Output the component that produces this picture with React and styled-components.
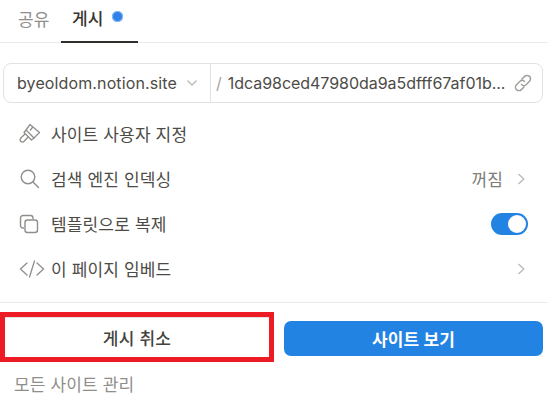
import styled, { createGlobalStyle } from "styled-components";

const GlobalStyle = createGlobalStyle`
  html, body {
    margin: 0;
    padding: 0;
    background: #fff;
    overflow: hidden;
  }
  * {
    box-sizing: border-box;
  }
`;

const Panel = styled.div`
  width: 548px;
  height: 405px;
  font-family: Inter, "Noto Sans CJK KR", sans-serif;
  color: #37352f;
  display: flex;
  flex-direction: column;
`;

const Tabs = styled.div`
  height: 43px;
  display: flex;
  padding-left: 11px;
  border-bottom: 1px solid #ebebea;
`;

const Tab = styled.div`
  height: 43px;
  padding: 0 0 6px ${(p) => (p.$active ? "11px" : "7px")};
  width: ${(p) => (p.$active ? "77px" : "50px")};
  display: flex;
  align-items: center;
  gap: 10px;
  font-size: 17px;
  font-weight: ${(p) => (p.$active ? 500 : 400)};
  color: ${(p) => (p.$active ? "#37352f" : "#8f8e8b")};
  border-bottom: ${(p) => (p.$active ? "2px solid #2f2e2b" : "none")};
`;

const Dot = styled.span`
  width: 11px;
  height: 11px;
  margin: -2px 0 0 -1px;
  border-radius: 50%;
  background: #2f80e8;
  box-shadow: inset 0 0 0 1px #8dbcf3;
`;

const AddressBar = styled.div`
  margin: 20px 5px 0 3px;
  height: 40px;
  border: 1px solid #e2e2e0;
  border-radius: 8px;
  display: flex;
  align-items: center;
  font-size: 16px;
`;

const Domain = styled.div`
  width: 207px;
  height: 100%;
  padding-left: 13px;
  display: flex;
  align-items: center;
  gap: 9px;
  border-right: 1px solid #e2e2e0;
  color: #4d4b46;
  letter-spacing: 0.12px;
`;

const Path = styled.div`
  flex: 1;
  display: flex;
  align-items: center;
  padding: 0 9px 0 5px;
  color: #4d4b46;
  min-width: 0;
`;

const Slash = styled.span`
  color: #a5a4a1;
  margin-right: 6px;
`;

const PathText = styled.span`
  flex: 1;
  white-space: nowrap;
  letter-spacing: -0.04px;
`;

const List = styled.div`
  padding-top: 8px;
  height: 200px;
  border-bottom: 1px solid #ebebea;
`;

const Row = styled.div`
  height: 45px;
  display: flex;
  align-items: center;
  padding: 0 21px 0 19px;
  font-size: 17px;
  letter-spacing: 0.15px;
  color: #4d4b46;
`;

const IconSlot = styled.span`
  width: 32px;
  display: flex;
  align-items: center;
  flex: none;
  color: #8f8e8b;
`;

const Label = styled.span`
  flex: 1;
`;

const Value = styled.span`
  color: #7d7c78;
  margin-right: 12px;
`;

const Toggle = styled.span`
  width: 37px;
  height: 22px;
  margin-right: -1px;
  border-radius: 11px;
  background: #2383e2;
  display: flex;
  align-items: center;
  justify-content: flex-end;
  padding-right: 2px;

  &::after {
    content: "";
    width: 18px;
    height: 18px;
    border-radius: 50%;
    background: #fff;
  }
`;

const Actions = styled.div`
  display: flex;
  justify-content: space-between;
  padding: 9px 5px 0 0;
`;

const CancelWrap = styled.div`
  width: 274px;
  height: 50px;
  border: 5px solid #ed1c24;
  display: flex;
`;

const Cancel = styled.div`
  flex: 1;
  display: flex;
  align-items: center;
  justify-content: center;
  font-size: 17px;
  letter-spacing: 0.3px;
  font-weight: 500;
  color: #45433e;
  background: #fff;
  box-shadow: inset 0 1px 0 #e2e2e0;
`;

const Primary = styled.div`
  margin-top: 9px;
  width: 259px;
  height: 35px;
  border-radius: 7px;
  background: #2383e2;
  color: #fff;
  font-size: 17px;
  letter-spacing: 0.1px;
  font-weight: 600;
  display: flex;
  align-items: center;
  justify-content: center;
`;

const Manage = styled.div`
  padding: 9px 0 0 14px;
  font-size: 17px;
  letter-spacing: 0.15px;
  color: #8f8e8b;
`;

const Chevron = ({ dir = "right", size = 12, color = "#b9b8b5" }) => (
  <svg width={size} height={size} viewBox="0 0 12 12" fill="none" stroke={color} strokeWidth="1.3">
    {dir === "right" ? <path d="M3.5 1 8.8 6 3.5 11" /> : <path d="M1.5 3.5 6 8 10.5 3.5" />}
  </svg>
);

const LinkIcon = () => (
  <svg width="20" height="20" viewBox="0 0 20 20" fill="none" stroke="#a0a09d" strokeWidth="1.5" strokeLinecap="round">
    <path d="M9 6 11.6 3.4a3.4 3.4 0 0 1 4.9 4.9L13.3 11.5a3.4 3.4 0 0 1-4.8 0" />
    <path d="M11 14 8.4 16.6a3.4 3.4 0 0 1-4.9-4.9L6.7 8.5a3.4 3.4 0 0 1 4.8 0" />
  </svg>
);

const BrushIcon = () => (
  <svg width="22" height="22" viewBox="0 0 22 22" fill="none" stroke="#8f8e8b" strokeWidth="1.3" strokeLinejoin="round">
    <path d="M11 1.5 20.5 9.5 15 15 7 7Z" />
    <path d="M13.8 4 11 7.5" />
    <path d="M7 7 5 9.5 12.5 17 15 15" />
    <path d="M6.3 10.8 1.8 15a2.3 2.3 0 0 0 3.3 3.3L9.3 13.8" />
  </svg>
);

const SearchIcon = () => (
  <svg width="21" height="21" viewBox="0 0 21 21" fill="none" stroke="#8f8e8b" strokeWidth="1.4" strokeLinecap="round">
    <circle cx="9" cy="9" r="6.8" />
    <path d="M14 14 19.5 19.5" />
  </svg>
);

const CopyIcon = () => (
  <svg width="20" height="20" viewBox="0 0 20 20" fill="none" stroke="#8f8e8b" strokeWidth="1.4">
    <path d="M5 14H4a2.5 2.5 0 0 1-2.5-2.5V4A2.5 2.5 0 0 1 4 1.5h7.5A2.5 2.5 0 0 1 14 4v1" />
    <rect x="6" y="6" width="12.5" height="12.5" rx="2.5" />
  </svg>
);

const CodeIcon = () => (
  <svg width="26" height="18" viewBox="0 0 26 18" fill="none" stroke="#8f8e8b" strokeWidth="1.3" strokeLinecap="round">
    <path d="M8 3 1.5 9 8 15M18 3 24.5 9 18 15M15.5 1 10.5 17" />
  </svg>
);

export default function App() {
  return (
    <>
      <GlobalStyle />
      <Panel>
        <Tabs>
          <Tab>공유</Tab>
          <Tab $active>
            게시
            <Dot />
          </Tab>
        </Tabs>
        <AddressBar>
          <Domain>
            byeoldom.notion.site
            <Chevron dir="down" />
          </Domain>
          <Path>
            <Slash>/</Slash>
            <PathText>1dca98ced47980da9a5dfff67af01b...</PathText>
            <LinkIcon />
          </Path>
        </AddressBar>
        <List>
          <Row>
            <IconSlot>
              <BrushIcon />
            </IconSlot>
            <Label>사이트 사용자 지정</Label>
          </Row>
          <Row>
            <IconSlot>
              <SearchIcon />
            </IconSlot>
            <Label>검색 엔진 인덱싱</Label>
            <Value>꺼짐</Value>
            <Chevron />
          </Row>
          <Row>
            <IconSlot>
              <CopyIcon />
            </IconSlot>
            <Label>템플릿으로 복제</Label>
            <Toggle />
          </Row>
          <Row>
            <IconSlot>
              <CodeIcon />
            </IconSlot>
            <Label>이 페이지 임베드</Label>
            <Chevron />
          </Row>
        </List>
        <Actions>
          <CancelWrap>
            <Cancel>게시 취소</Cancel>
          </CancelWrap>
          <Primary>사이트 보기</Primary>
        </Actions>
        <Manage>모든 사이트 관리</Manage>
      </Panel>
    </>
  );
}
